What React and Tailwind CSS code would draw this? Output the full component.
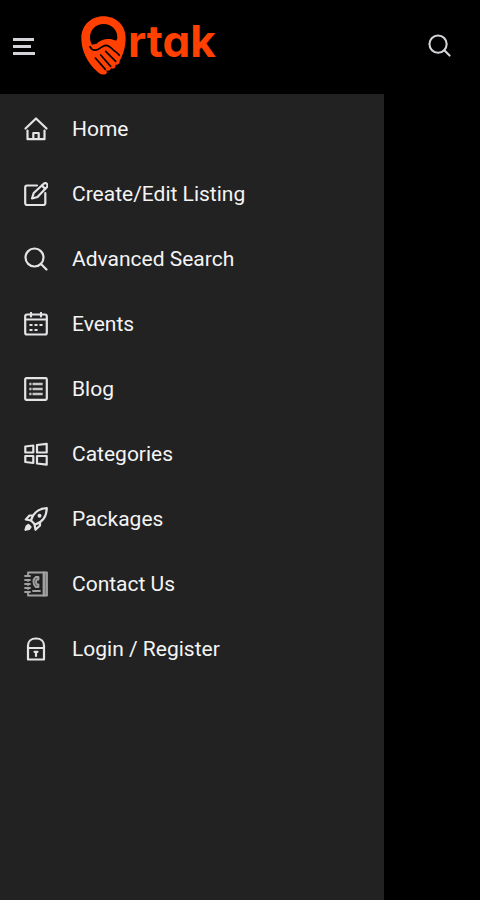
const iconClass = 'h-6 w-6 shrink-0 text-zinc-200';

function Icon({ children, width = 2.2, className = iconClass }) {
  return (
    <svg
      viewBox="0 0 24 24"
      fill="none"
      stroke="currentColor"
      strokeWidth={width}
      strokeLinecap="round"
      strokeLinejoin="round"
      className={className}
      aria-hidden="true"
    >
      {children}
    </svg>
  );
}

function SearchIcon({ className, width }) {
  return (
    <Icon className={className} width={width}>
      <circle cx="10.5" cy="10.5" r="9" />
      <path d="M17 17l5.500 5.500" />
    </Icon>
  );
}

function HomeIcon() {
  return (
    <Icon>
      <path d="M1.500 11.500L12 1.500l10.500 10M3.500 13.500v8.700h17v-8.700M9.300 22v-6h5.400v6" />
    </Icon>
  );
}

function EditIcon() {
  return (
    <Icon>
      <path d="M13 3.500H3A1.800 1.800 0 0 0 1.200 5.300v16A1.800 1.800 0 0 0 3 23h16.500a1.800 1.800 0 0 0 1.800-1.800V11" />
      <path d="M8 16.500l1.700-5.500L20 1.500q2-1 3 .5t0 3L13.500 15z" />
      <path d="M18 3.500l3 3.300" />
    </Icon>
  );
}

function EventsIcon() {
  return (
    <Icon>
      <rect x="1.200" y="2.500" width="21.600" height="20" rx="1.800" />
      <path d="M1.500 7.500h21M7 1v3.500M17 1v3.500" />
      <path d="M5.500 13h3M10.500 13h3M15.500 13h3M5.500 18h3M10.500 18h3" strokeWidth="2" strokeLinecap="butt" />
    </Icon>
  );
}

function BlogIcon() {
  return (
    <Icon>
      <rect x="1.200" y="1.200" width="21.600" height="21.600" rx="1.200" />
      <path
        d="M5.300 7h2.200M8.500 7h10.200M5.300 12h2.200M8.500 12h10.200M5.300 17h2.200M8.500 17h10.200"
        strokeWidth="2.600"
        strokeOpacity="0.85"
        strokeLinecap="butt"
      />
    </Icon>
  );
}

function CategoriesIcon() {
  return (
    <Icon>
      <path d="M1.300 4.500l8-1v7h-8zM13 3l9.700-1.200v8.700H13zM1.300 14h8v7l-8-1zM13 14h9.700v8.700L13 21.500z" />
    </Icon>
  );
}

function PackagesIcon() {
  return (
    <Icon>
      <path d="M7 13.500C8.500 7 14 1.500 22.800 1.200 22.500 10 17.500 15.500 11 17.500z" />
      <path d="M9 8.500H5.500L1.800 12.500l5.200 1M16 15v3.500l-4.500 4.300-1-5.300" />
      <circle cx="15.500" cy="8.800" r="0.900" fill="currentColor" />
      <path d="M2.500 19.500l2-1.500 2 2-1.500 2-3.500.8z" fill="currentColor" />
    </Icon>
  );
}

function ContactIcon() {
  return (
    <Icon width={1.800} className="h-[26px] w-6 shrink-0 text-neutral-400">
      <path d="M4 4V0.500h16v23H4V20M4 8v1M4 12v1M4 16v1" />
      <path d="M1 4h5M1 8h5M1 12h5M1 16h5M1 20h5" />
      <path d="M19.500 0.500H23v23h-3.500z" fill="currentColor" fillOpacity="0.7" />
      <path d="M14.500 5h-2.800c-3 2-3 7.500 0 10h2.800v-2.500h-1.500c-1.200-1.500-1.200-3.500 0-5h1.500z" fill="currentColor" fillOpacity="0.4" />
      <path d="M9 19h7" />
    </Icon>
  );
}

function LoginIcon() {
  return (
    <Icon>
      <path d="M4 11h16v11.500H4zM4 11V8.500C4 4.500 7 1.500 12 1.500s8 3 8 7V11" />
      <path d="M10.500 14.800h3M12 15v4" />
    </Icon>
  );
}

function LogoMark() {
  return (
    <svg viewBox="0 0 135 177" className="h-[59px] w-[45px] shrink-0" aria-hidden="true">
      <path
        fill="#ff4000"
        d="M67 1C29 1 1 30 1 66c0 38 18 75 48 101 8 7 16 10 24 8 6-2 6-7 2-12 7 3 14 1 15-6 8 3 15-2 14-11 8 1 13-4 12-12 11-17 18-44 18-68C134 28 105 1 67 1z"
      />
      <path
        fill="#000"
        d="M68 24c-23 0-41 17-41 40 0 9 2 16 6 22l14-3c8-8 19-13 31-14 10-1 18 1 27 5 3-3 4-7 4-11 0-22-18-39-41-39z"
      />
      <g fill="none" stroke="#000" strokeWidth="5" strokeLinecap="round" strokeLinejoin="round">
        <path d="M27 92c4 8 11 12 19 10 11-3 19-14 29-14 8 0 14 6 20 12 8 7 15 11 20 18" />
        <path d="M74 106l30 30M59 117l30 34M43 126l30 34" />
      </g>
    </svg>
  );
}

const MENU_ITEMS = [
  { label: 'Home', icon: HomeIcon },
  { label: 'Create/Edit Listing', icon: EditIcon },
  { label: 'Advanced Search', icon: SearchIcon },
  { label: 'Events', icon: EventsIcon },
  { label: 'Blog', icon: BlogIcon },
  { label: 'Categories', icon: CategoriesIcon },
  { label: 'Packages', icon: PackagesIcon },
  { label: 'Contact Us', icon: ContactIcon },
  { label: 'Login / Register', icon: LoginIcon },
];

function Header() {
  return (
    <header className="flex h-[94px] items-center pb-1 pl-3 pr-[29px]">
      <button type="button" aria-label="Menu" className="flex h-6 w-6 items-center text-zinc-300">
        <svg viewBox="0 0 24 24" stroke="currentColor" strokeWidth="3" className="h-6 w-6" aria-hidden="true">
          <path d="M1 6.500h21M1 13.500h18M1 20.500h22" />
        </svg>
      </button>
      <a href="#home" className="ml-[45px] flex items-center text-[#ff4000]">
        <LogoMark />
        <span className="ml-[2px] pb-2 font-['Inter',sans-serif] text-[44px] leading-[48px] font-bold [font-feature-settings:'cv11']">
          rtak
        </span>
      </a>
      <button type="button" aria-label="Search" className="ml-auto">
        <SearchIcon className="h-[23px] w-[23px] text-zinc-300" />
      </button>
    </header>
  );
}

function App() {
  return (
    <div className="flex min-h-screen flex-col bg-black font-['Roboto',sans-serif]">
      <Header />
      <nav aria-label="Main" className="w-4/5 flex-1 bg-[#222222] pt-[2px]">
        <ul>
          {MENU_ITEMS.map(({ label, icon: ItemIcon }) => (
            <li key={label}>
              <a href="#menu" className="flex h-[65px] items-center gap-6 pl-6 text-[21px] leading-6 text-zinc-100">
                <ItemIcon />
                {label}
              </a>
            </li>
          ))}
        </ul>
      </nav>
    </div>
  );
}

export default App;
